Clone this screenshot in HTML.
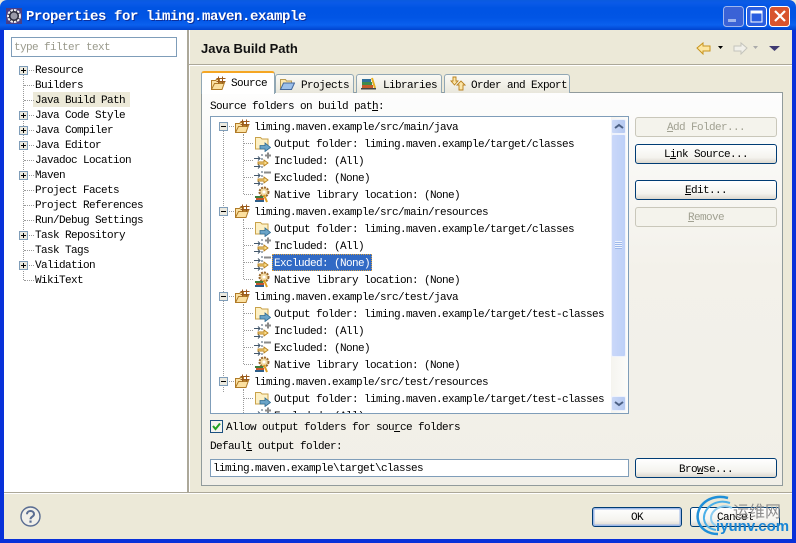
<!DOCTYPE html>
<html><head><meta charset="utf-8">
<style>
html,body{margin:0;padding:0}
body{width:796px;height:543px;overflow:hidden;position:relative;background:#ece9d8;font:11px/14px "Liberation Mono",monospace;letter-spacing:-.6px;color:#000}
.a,.t,.b,svg.i{position:absolute}
.t{white-space:pre;line-height:14px;height:14px;margin-top:2px}
.b{box-sizing:border-box;border:1px solid #003c74;border-radius:3px;background:linear-gradient(#fff,#f4f3ee 70%,#dcd8ce);text-align:center;white-space:pre;line-height:21px}
.d{border-color:#c9c7ba;background:#f4f3ec;color:#a1a192}
.tab{position:absolute;box-sizing:border-box;top:74px;height:19px;background:linear-gradient(#fafaf5,#e9e7dc);border:1px solid #91a7b4;border-bottom:none;border-radius:3px 3px 0 0}
.v{position:absolute;border-left:1px dotted #9a9a9a}
.h{position:absolute;border-top:1px dotted #9a9a9a}
u{text-decoration:underline}
</style></head><body>
<svg width="0" height="0" style="position:absolute">
<defs>
<symbol id="plus" viewBox="0 0 9 9"><rect x=".5" y=".5" width="8" height="8" fill="#eceae0" stroke="#7f9db9"/><path d="M2 4.500h5M4.500 2v5" stroke="#000"/></symbol>
<symbol id="minus" viewBox="0 0 9 9"><rect x=".5" y=".5" width="8" height="8" fill="#eceae0" stroke="#7f9db9"/><path d="M2 4.500h5" stroke="#000"/></symbol>
<symbol id="pkg" viewBox="0 0 16 16"><path d="M1.500 5.500h4l1-1h3v3h5l-2.500 7h-10.500z" fill="#fbe0a0" stroke="#b07b28"/><path d="M1.500 14.500l3-6h10" fill="none" stroke="#b07b28"/><path d="M8.500 1.500v7M12.500 1.500v7M6.500 3.500h9M6.500 6.500h9" stroke="#9a5a1e" fill="none"/></symbol>
<symbol id="out" viewBox="0 0 17 17"><path d="M1.500 2.500h5l1.500 1.500h6v10h-12.500z" fill="#fdf0c4" stroke="#c9a24a"/><path d="M6 10.500h5V8l5.500 4.500-5.500 4v-2.500H6z" fill="#6ba4c8" stroke="#2f6a90" stroke-width=".8"/></symbol>
<symbol id="inc" viewBox="0 0 17 17"><path d="M0 6.500h6M4 4.500l2 2-2 2M0 14.500h6M4 12.500l2 2-2 2" stroke="#44586c" fill="none"/><path d="M8 2v14" stroke="#44586c" stroke-dasharray="2 2"/><path d="M4 10h6V8l4 3-4 3v-2H4z" fill="#fce08e" stroke="#b8801c" stroke-width=".9"/><path d="M11 3.500h6M14 .5v6" stroke="#8a8a8a" stroke-width="2"/></symbol>
<symbol id="exc" viewBox="0 0 17 17"><path d="M0 6.500h6M4 4.500l2 2-2 2M0 14.500h6M4 12.500l2 2-2 2" stroke="#44586c" fill="none"/><path d="M8 2v14" stroke="#44586c" stroke-dasharray="2 2"/><path d="M4 10h6V8l4 3-4 3v-2H4z" fill="#fce08e" stroke="#b8801c" stroke-width=".9"/><path d="M10 3.500h7" stroke="#8a8a8a" stroke-width="2"/></symbol>
<symbol id="nat" viewBox="0 0 17 17"><circle cx="10" cy="6" r="4.500" fill="#f2d9a0" stroke="#9a6a30" stroke-width="2" stroke-dasharray="2 1"/><circle cx="10" cy="6" r="1.500" fill="#fff"/><rect x="1" y="10" width="8" height="2" fill="#3f7d3c"/><rect x="2" y="12" width="8" height="2" fill="#c9552a"/><rect x="1" y="14" width="9" height="2" fill="#2e5f8a"/><path d="M10 9l3 7" stroke="#e0a020" stroke-width="2"/></symbol>
</defs></svg>

<!-- title bar -->
<div class="a" style="left:0;top:0;width:796px;height:30px;background:linear-gradient(#0a5be0 0,#0a5ae8 3px,#0054e3 8px,#0155e5 18px,#0a60ee 25px,#0043cf 30px);border-radius:7px 7px 0 0"></div>
<div class="a" style="left:0;top:30px;width:4px;height:513px;background:#0831d9"></div>
<div class="a" style="right:0;top:30px;width:4px;height:513px;background:#0831d9"></div>
<div class="a" style="left:0;top:539px;width:796px;height:4px;background:#0831d9"></div>
<svg class="i" style="left:6px;top:8px" width="16" height="16" viewBox="0 0 16 16"><rect width="16" height="16" fill="#4a3f86"/><circle cx="8" cy="8" r="6" fill="#2b2b3c" stroke="#eee" stroke-width="2" stroke-dasharray="2.500 1"/><circle cx="8" cy="8" r="3.500" fill="#9a9aa8"/></svg>
<div class="a" style="left:26px;top:9px;font:bold 14px/16px 'Liberation Mono',monospace;letter-spacing:-.4px;color:#fff;white-space:pre;text-shadow:1px 1px 0 #0a2f9c">Properties for liming.maven.example</div>
<svg class="i" style="left:723px;top:6px" width="68" height="21" viewBox="0 0 68 21">
<rect x=".5" y=".5" width="20" height="20" rx="3" fill="#3a62d6" stroke="#9fb6ee"/><rect x="5" y="13" width="8" height="3" fill="#9db4ec"/>
<rect x="23.500" y=".5" width="20" height="20" rx="3" fill="#2a5ee0" stroke="#fff"/><rect x="28" y="5" width="11" height="11" fill="none" stroke="#fff"/><rect x="28" y="5" width="11" height="2.500" fill="#fff"/>
<rect x="46.500" y=".5" width="20" height="20" rx="3" fill="#d8542e" stroke="#fff"/><path d="M52 5l10 10M62 5l-10 10" stroke="#fff" stroke-width="2.200"/></svg>

<!-- left pane -->
<div class="a" style="left:4px;top:30px;width:183px;height:462px;background:#fff"></div>
<div class="a" style="left:187px;top:30px;width:2px;height:462px;background:#aca899;border-right:1px solid #fff"></div>
<div class="a" style="left:11px;top:37px;width:164px;height:18px;border:1px solid #7f9db9;background:#fff"></div>
<div class="t" style="left:14px;top:39px;color:#9a9a8c">type filter text</div>
<div class="a" style="left:33px;top:92px;width:97px;height:15px;background:#ece9d8"></div>
<div class="v" style="left:23px;top:70px;height:210px"></div>
<div class="h" style="left:24px;top:70px;width:10px"></div><div class="h" style="left:24px;top:85px;width:10px"></div><div class="h" style="left:24px;top:100px;width:10px"></div><div class="h" style="left:24px;top:115px;width:10px"></div><div class="h" style="left:24px;top:130px;width:10px"></div><div class="h" style="left:24px;top:145px;width:10px"></div><div class="h" style="left:24px;top:160px;width:10px"></div><div class="h" style="left:24px;top:175px;width:10px"></div><div class="h" style="left:24px;top:190px;width:10px"></div><div class="h" style="left:24px;top:205px;width:10px"></div><div class="h" style="left:24px;top:220px;width:10px"></div><div class="h" style="left:24px;top:235px;width:10px"></div><div class="h" style="left:24px;top:250px;width:10px"></div><div class="h" style="left:24px;top:265px;width:10px"></div><div class="h" style="left:24px;top:280px;width:10px"></div>
<svg class="i" style="left:19px;top:66px" width="9" height="9"><use href="#plus"/></svg>
<svg class="i" style="left:19px;top:111px" width="9" height="9"><use href="#plus"/></svg>
<svg class="i" style="left:19px;top:126px" width="9" height="9"><use href="#plus"/></svg>
<svg class="i" style="left:19px;top:141px" width="9" height="9"><use href="#plus"/></svg>
<svg class="i" style="left:19px;top:171px" width="9" height="9"><use href="#plus"/></svg>
<svg class="i" style="left:19px;top:231px" width="9" height="9"><use href="#plus"/></svg>
<svg class="i" style="left:19px;top:261px" width="9" height="9"><use href="#plus"/></svg>
<div class="t" style="left:35px;top:62px">Resource</div>
<div class="t" style="left:35px;top:77px">Builders</div>
<div class="t" style="left:35px;top:92px">Java Build Path</div>
<div class="t" style="left:35px;top:107px">Java Code Style</div>
<div class="t" style="left:35px;top:122px">Java Compiler</div>
<div class="t" style="left:35px;top:137px">Java Editor</div>
<div class="t" style="left:35px;top:152px">Javadoc Location</div>
<div class="t" style="left:35px;top:167px">Maven</div>
<div class="t" style="left:35px;top:182px">Project Facets</div>
<div class="t" style="left:35px;top:197px">Project References</div>
<div class="t" style="left:35px;top:212px">Run/Debug Settings</div>
<div class="t" style="left:35px;top:227px">Task Repository</div>
<div class="t" style="left:35px;top:242px">Task Tags</div>
<div class="t" style="left:35px;top:257px">Validation</div>
<div class="t" style="left:35px;top:272px">WikiText</div>

<!-- header -->
<div class="a" style="left:201px;top:41px;font:bold 13px/16px 'Liberation Sans',sans-serif;letter-spacing:0;color:#111;white-space:pre">Java Build Path</div>
<div class="a" style="left:189px;top:64px;width:603px;height:1px;background:#aca899"></div>
<div class="a" style="left:189px;top:65px;width:603px;height:1px;background:#fff"></div>
<svg class="i" style="left:696px;top:41px" width="90" height="14" viewBox="0 0 90 14">
<path d="M1 7l6-5v3h7v5h-7v3z" fill="#fde6a0" stroke="#c8941e"/>
<path d="M22 5h5l-2.500 3z" fill="#000"/>
<path d="M51 7l-6-5v3h-7v5h7v3z" fill="#f1f0ea" stroke="#c4c4bc"/>
<path d="M57 5h5l-2.500 3z" fill="#aaa"/>
<path d="M73 5h11l-5.500 5z" fill="#3f3a72"/></svg>

<!-- tab folder -->
<div class="a" style="left:201px;top:92px;width:582px;height:394px;box-sizing:border-box;border:1px solid #919b9c;background:linear-gradient(#fdfdfd,#f3f1ea 45%,#f1efe8)"></div>
<div class="tab" style="left:275px;width:79px"></div>
<div class="tab" style="left:356px;width:86px"></div>
<div class="tab" style="left:444px;width:126px"></div>
<div class="a" style="left:201px;top:71px;width:74px;height:23px;box-sizing:border-box;background:#fff;border:1px solid #91a7b4;border-top:2px solid #f5a623;border-bottom:none;border-radius:3px 3px 0 0"></div>
<svg class="i" style="left:210px;top:75px" width="16" height="16"><use href="#pkg"/></svg>
<div class="t" style="left:231px;top:75px">Source</div>
<svg class="i" style="left:279px;top:77px" width="16" height="14" viewBox="0 0 16 14"><path d="M1.500 12.500v-10h5l1 1.500h5v2" fill="#fbe7ae" stroke="#b89a50"/><path d="M1.500 12.500l3-6.500h11l-3 6.500z" fill="#9cc0ea" stroke="#44689c"/></svg>
<div class="t" style="left:301px;top:77px">Projects</div>
<svg class="i" style="left:361px;top:77px" width="16" height="14" viewBox="0 0 16 14"><rect x="1" y="2" width="9" height="3" fill="#2e6f9a"/><rect x="1" y="5" width="10" height="3" fill="#3f8a4a"/><rect x="1" y="8" width="11" height="3" fill="#c45b2a"/><path d="M11 1l3 10" stroke="#e8b020" stroke-width="2"/><rect x="0" y="11" width="15" height="1.500" fill="#444"/></svg>
<div class="t" style="left:383px;top:77px">Libraries</div>
<svg class="i" style="left:450px;top:76px" width="16" height="15" viewBox="0 0 16 15"><path d="M3 1h3v4h2l-3.500 4L1 5h2z" fill="#fce6a8" stroke="#b8801c" stroke-width=".9"/><path d="M11 14h-2v-5H7l4-4 4 4h-2v5z" fill="#fce6a8" stroke="#b8801c" stroke-width=".9"/></svg>
<div class="t" style="left:471px;top:77px">Order and Export</div>
<div class="t" style="left:210px;top:98px">Source folders on build pat<u>h</u>:</div>

<!-- tree -->
<div class="a" style="left:210px;top:116px;width:419px;height:298px;box-sizing:border-box;border:1px solid #7f9db9;background:#fff;overflow:hidden">
<div class="a" style="left:0;top:0;width:400px;height:296px;overflow:hidden">
<div class="v" style="left:12px;top:10px;height:265px"></div>
<div class="v" style="left:32px;top:17px;height:60px"></div><div class="v" style="left:32px;top:102px;height:60px"></div><div class="v" style="left:32px;top:187px;height:60px"></div><div class="v" style="left:32px;top:272px;height:30px"></div>
<div class="h" style="left:16px;top:9px;width:7px"></div><div class="h" style="left:16px;top:94px;width:7px"></div><div class="h" style="left:16px;top:179px;width:7px"></div><div class="h" style="left:16px;top:264px;width:7px"></div>
<div class="h" style="left:33px;top:26px;width:9px"></div><div class="h" style="left:33px;top:43px;width:9px"></div><div class="h" style="left:33px;top:60px;width:9px"></div><div class="h" style="left:33px;top:77px;width:9px"></div>
<div class="h" style="left:33px;top:111px;width:9px"></div><div class="h" style="left:33px;top:128px;width:9px"></div><div class="h" style="left:33px;top:145px;width:9px"></div><div class="h" style="left:33px;top:162px;width:9px"></div>
<div class="h" style="left:33px;top:196px;width:9px"></div><div class="h" style="left:33px;top:213px;width:9px"></div><div class="h" style="left:33px;top:230px;width:9px"></div><div class="h" style="left:33px;top:247px;width:9px"></div>
<div class="h" style="left:33px;top:281px;width:9px"></div>

<div class="a" style="left:61px;top:137px;width:100px;height:17px;box-sizing:border-box;background:#316ac5;border:1px dotted #d8a040"></div>

<svg class="i" style="left:8px;top:5px" width="9" height="9"><use href="#minus"/></svg>
<svg class="i" style="left:23px;top:1px" width="16" height="16"><use href="#pkg"/></svg>
<div class="t" style="left:43px;top:2px">liming.maven.example/src/main/java</div>
<svg class="i" style="left:43px;top:18px" width="17" height="17"><use href="#out"/></svg>
<div class="t" style="left:63px;top:19px">Output folder: liming.maven.example/target/classes</div>
<svg class="i" style="left:43px;top:35px" width="17" height="17"><use href="#inc"/></svg>
<div class="t" style="left:63px;top:36px">Included: (All)</div>
<svg class="i" style="left:43px;top:52px" width="17" height="17"><use href="#exc"/></svg>
<div class="t" style="left:63px;top:53px">Excluded: (None)</div>
<svg class="i" style="left:43px;top:69px" width="17" height="17"><use href="#nat"/></svg>
<div class="t" style="left:63px;top:70px">Native library location: (None)</div>

<svg class="i" style="left:8px;top:90px" width="9" height="9"><use href="#minus"/></svg>
<svg class="i" style="left:23px;top:86px" width="16" height="16"><use href="#pkg"/></svg>
<div class="t" style="left:43px;top:87px">liming.maven.example/src/main/resources</div>
<svg class="i" style="left:43px;top:103px" width="17" height="17"><use href="#out"/></svg>
<div class="t" style="left:63px;top:104px">Output folder: liming.maven.example/target/classes</div>
<svg class="i" style="left:43px;top:120px" width="17" height="17"><use href="#inc"/></svg>
<div class="t" style="left:63px;top:121px">Included: (All)</div>
<svg class="i" style="left:43px;top:137px" width="17" height="17"><use href="#exc"/></svg>
<div class="t" style="left:63px;top:138px;color:#fff">Excluded: (None)</div>
<svg class="i" style="left:43px;top:154px" width="17" height="17"><use href="#nat"/></svg>
<div class="t" style="left:63px;top:155px">Native library location: (None)</div>

<svg class="i" style="left:8px;top:175px" width="9" height="9"><use href="#minus"/></svg>
<svg class="i" style="left:23px;top:171px" width="16" height="16"><use href="#pkg"/></svg>
<div class="t" style="left:43px;top:172px">liming.maven.example/src/test/java</div>
<svg class="i" style="left:43px;top:188px" width="17" height="17"><use href="#out"/></svg>
<div class="t" style="left:63px;top:189px">Output folder: liming.maven.example/target/test-classes</div>
<svg class="i" style="left:43px;top:205px" width="17" height="17"><use href="#inc"/></svg>
<div class="t" style="left:63px;top:206px">Included: (All)</div>
<svg class="i" style="left:43px;top:222px" width="17" height="17"><use href="#exc"/></svg>
<div class="t" style="left:63px;top:223px">Excluded: (None)</div>
<svg class="i" style="left:43px;top:239px" width="17" height="17"><use href="#nat"/></svg>
<div class="t" style="left:63px;top:240px">Native library location: (None)</div>

<svg class="i" style="left:8px;top:260px" width="9" height="9"><use href="#minus"/></svg>
<svg class="i" style="left:23px;top:256px" width="16" height="16"><use href="#pkg"/></svg>
<div class="t" style="left:43px;top:257px">liming.maven.example/src/test/resources</div>
<svg class="i" style="left:43px;top:273px" width="17" height="17"><use href="#out"/></svg>
<div class="t" style="left:63px;top:274px">Output folder: liming.maven.example/target/test-classes</div>
<svg class="i" style="left:43px;top:290px" width="17" height="17"><use href="#inc"/></svg>
<div class="t" style="left:63px;top:291px">Excluded: (All)</div>
</div>
<!-- scrollbar -->
<div class="a" style="left:400px;top:0;width:17px;height:296px;background:linear-gradient(90deg,#f5f4ef,#fcfcfa)"></div>
<div class="a" style="left:400px;top:2px;width:15px;height:15px;background:linear-gradient(90deg,#cad8f6,#b5c9f2);border:1px solid #eef2fc;box-sizing:border-box;border-radius:2px"></div>
<svg class="i" style="left:403px;top:6px" width="10" height="7"><path d="M1 5l4-3 4 3" fill="none" stroke="#4d6185" stroke-width="2"/></svg>
<div class="a" style="left:400px;top:17px;width:15px;height:223px;background:linear-gradient(90deg,#cad8f9,#bdd0f8);border:1px solid #eef2fc;box-sizing:border-box;border-radius:2px"></div>
<div class="a" style="left:404px;top:124px;width:7px;height:8px;background:repeating-linear-gradient(#eef3fd 0,#eef3fd 1px,#9db8ea 1px,#9db8ea 2px)"></div>
<div class="a" style="left:400px;top:279px;width:15px;height:15px;background:linear-gradient(90deg,#cad8f6,#b5c9f2);border:1px solid #eef2fc;box-sizing:border-box;border-radius:2px"></div>
<svg class="i" style="left:403px;top:283px" width="10" height="7"><path d="M1 2l4 3 4-3" fill="none" stroke="#4d6185" stroke-width="2"/></svg>
</div>

<!-- side buttons -->
<div class="b d" style="left:635px;top:117px;width:142px;height:20px"><u>A</u>dd Folder...</div>
<div class="b" style="left:635px;top:144px;width:142px;height:20px">L<u>i</u>nk Source...</div>
<div class="b" style="left:635px;top:180px;width:142px;height:20px"><u>E</u>dit...</div>
<div class="b d" style="left:635px;top:207px;width:142px;height:20px"><u>R</u>emove</div>

<!-- checkbox -->
<div class="a" style="left:210px;top:420px;width:13px;height:13px;box-sizing:border-box;border:1px solid #1c5180;background:#f4f3ee"></div>
<svg class="i" style="left:212px;top:422px" width="9" height="9"><path d="M1 4l2.500 3L8 1.500" fill="none" stroke="#21a121" stroke-width="2"/></svg>
<div class="t" style="left:226px;top:419px">Allow output folders for sou<u>r</u>ce folders</div>
<div class="t" style="left:210px;top:438px">Defaul<u>t</u> output folder:</div>
<div class="a" style="left:210px;top:459px;width:419px;height:18px;box-sizing:border-box;border:1px solid #7f9db9;background:#fff"></div>
<div class="t" style="left:213px;top:460px">liming.maven.example\target\classes</div>
<div class="b" style="left:635px;top:458px;width:142px;height:20px;line-height:22px">Bro<u>w</u>se...</div>

<!-- bottom -->
<div class="a" style="left:4px;top:492px;width:788px;height:1px;background:#aca899"></div>
<div class="a" style="left:4px;top:493px;width:788px;height:1px;background:#fff"></div>
<svg class="i" style="left:20px;top:506px" width="21" height="21" viewBox="0 0 21 21"><circle cx="10.500" cy="10.500" r="9.500" fill="#f1f0ea" stroke="#5a6d92" stroke-width="1.400"/><path d="M7 8.200c0-4.200 7-4.200 7 0 0 2.500-3.500 2.500-3.500 5" fill="none" stroke="#5a6d92" stroke-width="2"/><rect x="9.400" y="14.500" width="2.200" height="2.200" fill="#5a6d92"/></svg>
<div class="b" style="left:592px;top:507px;width:90px;height:20px;line-height:20px;box-shadow:inset 0 0 0 1.500px #9db8e8">OK</div>
<div class="b" style="left:690px;top:507px;width:90px;height:20px;line-height:20px">Cancel</div>

<!-- watermark -->
<svg class="i" style="left:690px;top:494px" width="56" height="44" viewBox="0 0 56 44"><path d="M38 4C20-1 5 12 8 26c2 9 10 14 20 14" fill="none" stroke="#1f8fd8" stroke-width="2.500"/><path d="M40 9C26 4 13 14 14 25c1 7 6 10 12 11" fill="none" stroke="#4cb0e8" stroke-width="2"/><path d="M42 14C32 9 21 16 21 24c0 4 2 6 5 8" fill="none" stroke="#8ccdf0" stroke-width="2"/></svg>
<div class="a" style="left:733px;top:501px;font:16px/18px 'Noto Sans CJK SC',sans-serif;letter-spacing:0;color:#8d8d8d;white-space:pre">运维网</div>
<div class="a" style="left:716px;top:518px;font:bold 15px/17px 'Liberation Sans',sans-serif;letter-spacing:0;color:#1a86d6;white-space:pre">iyunv.com</div>
</body></html>
